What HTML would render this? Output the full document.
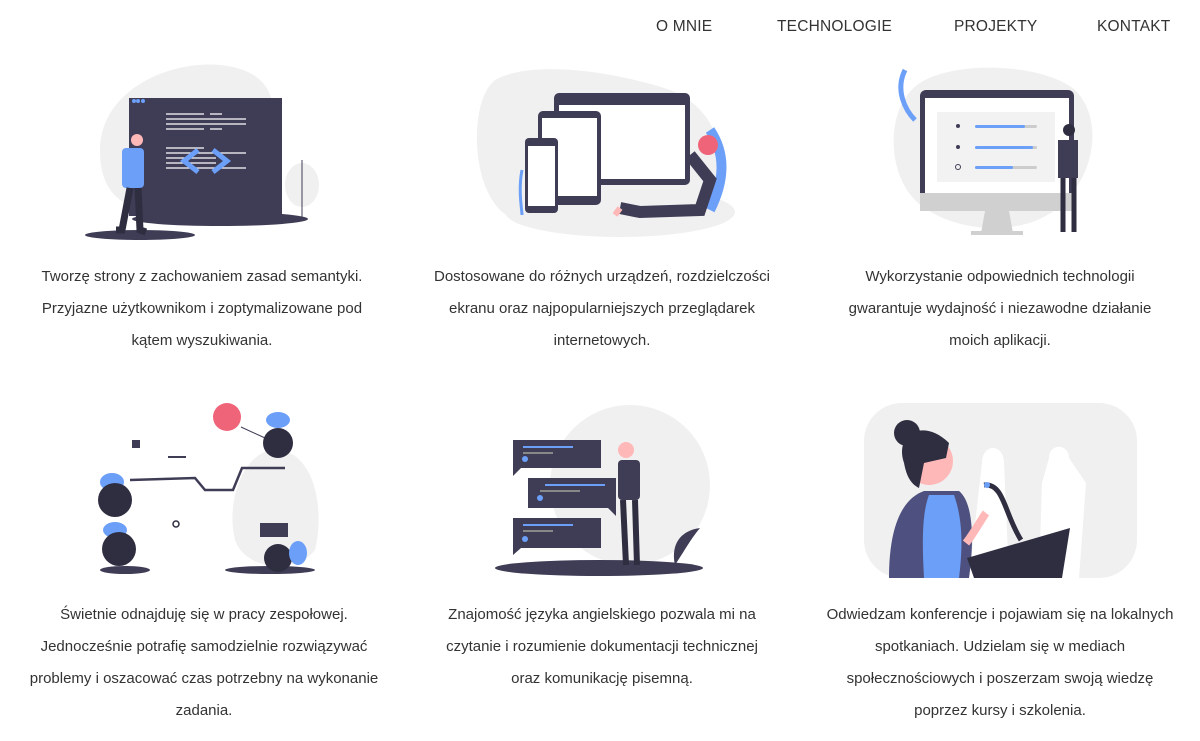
<!DOCTYPE html>
<html><head><meta charset="utf-8"><style>
body{margin:0;width:1200px;height:741px;background:#fff;font-family:"Liberation Sans","Noto Sans CJK SC",sans-serif;color:#333;position:relative;overflow:hidden}
.nav{position:absolute;top:18px;font-size:15.5px;letter-spacing:.2px;color:#333}
.t{position:absolute;width:400px;text-align:center;font-size:15px;line-height:32px;font-weight:300}
svg{position:absolute}
</style></head><body>
<div class="nav" style="left:656px">O MNIE</div>
<div class="nav" style="left:777px">TECHNOLOGIE</div>
<div class="nav" style="left:954px">PROJEKTY</div>
<div class="nav" style="left:1097px">KONTAKT</div>

<!-- 1 -->
<svg style="left:80px;top:60px" width="260" height="190">
<path d="M20 90 C20 30 90 0 140 5 C190 10 200 40 190 80 L60 150 C30 140 20 120 20 90Z" fill="#f0f0f0"/>
<ellipse cx="140" cy="159" rx="88" ry="7" fill="#3f3d56"/>
<ellipse cx="60" cy="175" rx="55" ry="5" fill="#3f3d56"/>
<rect x="49" y="38" width="153" height="118" fill="#3f3d56"/>
<circle cx="54" cy="41" r="2" fill="#6c9ff8"/><circle cx="58" cy="41" r="2" fill="#6c9ff8"/><circle cx="63" cy="41" r="2" fill="#6c9ff8"/>
<g stroke="#fff" stroke-width="1.2"><path d="M86 54h38M130 54h12M86 59h80M86 64h80M86 69h38M130 69h12M86 88h38M86 93h80M86 98h50M86 103h50M86 108h80"/></g>
<path d="M118 90 L104 101 L118 112 M133 90 L147 101 L133 112" stroke="#6c9ff8" stroke-width="5" fill="none"/>
<ellipse cx="222" cy="125" rx="17" ry="22" fill="#f0f0f0"/><path d="M222 100v57" stroke="#3f3d56"/>
<rect x="42" y="88" width="22" height="40" rx="4" fill="#6c9ff8"/>
<circle cx="57" cy="80" r="6" fill="#ffb8b8"/>
<path d="M50 128 L42 170 L36 170 M58 128 L60 170 L66 172" stroke="#2f2e41" stroke-width="7" fill="none"/>
</svg>
<!-- 2 -->
<svg style="left:470px;top:60px" width="270" height="185">
<path d="M25 20 C60 0 140 10 200 30 C250 50 260 100 240 140 C200 180 60 180 30 150 C0 120 0 40 25 20Z" fill="#f0f0f0"/>
<ellipse cx="150" cy="152" rx="115" ry="25" fill="#f0f0f0"/>
<rect x="84" y="33" width="136" height="92" rx="5" fill="#3f3d56"/><rect x="89" y="45" width="126" height="74" fill="#fff"/>
<rect x="68" y="51" width="63" height="94" rx="5" fill="#3f3d56"/><rect x="72" y="58" width="55" height="78" fill="#fff"/>
<rect x="55" y="78" width="33" height="75" rx="4" fill="#3f3d56"/><rect x="58" y="86" width="27" height="60" fill="#fff"/>
<path d="M240 70 C260 100 250 130 240 150" stroke="#6c9ff8" stroke-width="10" fill="none"/>
<circle cx="238" cy="85" r="10" fill="#f0647a"/><path d="M220 95 L240 120 L230 150 L170 152 L150 148" stroke="#3f3d56" stroke-width="12" fill="none"/>
<path d="M150 148 L145 155" stroke="#ffb8b8" stroke-width="6"/>
<path d="M52 110 C48 130 52 150 52 155" stroke="#6c9ff8" stroke-width="3" fill="none"/>
</svg>
<!-- 3 -->
<svg style="left:885px;top:60px" width="230" height="185">
<path d="M40 20 C80 0 160 5 190 30 C220 60 210 120 170 150 C130 180 60 170 30 140 C0 110 0 40 40 20Z" fill="#f0f0f0"/>
<path d="M20 10 C10 30 20 50 30 60" stroke="#6c9ff8" stroke-width="5" fill="none"/>
<rect x="35" y="30" width="154" height="112" rx="6" fill="#3f3d56"/><rect x="40" y="38" width="144" height="95" fill="#fff"/>
<rect x="35" y="133" width="154" height="18" fill="#d0d0d0"/>
<path d="M100 151 L96 173 L128 173 L124 151Z" fill="#d0d0d0"/><rect x="86" y="171" width="52" height="4" fill="#d0d0d0"/>
<rect x="52" y="52" width="118" height="70" fill="#f2f2f2"/>
<rect x="90" y="65" width="62" height="3" rx="1.5" fill="#ccc"/><rect x="90" y="65" width="50" height="3" rx="1.5" fill="#6c9ff8"/>
<rect x="90" y="86" width="62" height="3" rx="1.5" fill="#ccc"/><rect x="90" y="86" width="58" height="3" rx="1.5" fill="#6c9ff8"/>
<rect x="90" y="106" width="62" height="3" rx="1.5" fill="#ccc"/><rect x="90" y="106" width="38" height="3" rx="1.5" fill="#6c9ff8"/>
<circle cx="73" cy="66" r="2" fill="#3f3d56"/><circle cx="73" cy="87" r="2" fill="#3f3d56"/><circle cx="73" cy="107" r="2.5" fill="none" stroke="#3f3d56"/>
<circle cx="184" cy="70" r="6" fill="#2f2e41"/>
<path d="M173 80 h20 v38 h-20z" fill="#3f3d56"/><path d="M178 118 L178 172 M189 118 L189 172" stroke="#2f2e41" stroke-width="5"/>
</svg>
<!-- 4 -->
<svg style="left:85px;top:400px" width="240" height="180">
<path d="M190 50 C230 50 240 110 230 150 C210 175 160 170 150 140 C140 100 160 50 190 50Z" fill="#f0f0f0"/>
<ellipse cx="185" cy="170" rx="45" ry="4" fill="#3f3d56"/><ellipse cx="40" cy="170" rx="25" ry="4" fill="#3f3d56"/>
<path d="M45 80 L110 78 L120 90 L148 90 L157 68 L200 68" stroke="#3f3d56" stroke-width="2.5" fill="none"/>
<path d="M83 57 h18" stroke="#3f3d56" stroke-width="2"/>
<circle cx="142" cy="17" r="14" fill="#f0647a"/><path d="M156 27 L180 38" stroke="#3f3d56"/>
<ellipse cx="193" cy="20" rx="12" ry="8" fill="#6c9ff8"/><circle cx="193" cy="43" r="15" fill="#2f2e41"/>
<ellipse cx="27" cy="82" rx="12" ry="9" fill="#6c9ff8"/><circle cx="30" cy="100" r="17" fill="#2f2e41"/>
<ellipse cx="30" cy="130" rx="12" ry="8" fill="#6c9ff8"/><circle cx="34" cy="149" r="17" fill="#2f2e41"/>
<circle cx="91" cy="124" r="3" fill="none" stroke="#2f2e41" stroke-width="1.5"/>
<rect x="47" y="40" width="8" height="8" fill="#3f3d56"/>
<rect x="175" y="123" width="28" height="14" fill="#3f3d56"/><circle cx="193" cy="158" r="14" fill="#2f2e41"/><ellipse cx="213" cy="153" rx="9" ry="12" fill="#6c9ff8"/>
</svg>
<!-- 5 -->
<svg style="left:495px;top:400px" width="230" height="180">
<circle cx="135" cy="85" r="80" fill="#f0f0f0"/>
<ellipse cx="104" cy="168" rx="104" ry="8" fill="#3f3d56"/>
<rect x="18" y="40" width="88" height="28" fill="#3f3d56"/><path d="M18 68 v8 l8-8z" fill="#3f3d56"/>
<rect x="33" y="78" width="88" height="30" fill="#3f3d56"/><path d="M121 108 v8 l-8-8z" fill="#3f3d56"/>
<rect x="18" y="118" width="88" height="30" fill="#3f3d56"/><path d="M18 148 v7 l8-7z" fill="#3f3d56"/>
<g stroke="#6c9ff8" stroke-width="2"><path d="M28 47h50M50 85h60M28 125h50"/></g><g stroke="#888" stroke-width="2"><path d="M28 53h30M45 91h40M28 131h30"/></g>
<circle cx="30" cy="59" r="3" fill="#6c9ff8"/><circle cx="45" cy="98" r="3" fill="#6c9ff8"/><circle cx="30" cy="139" r="3" fill="#6c9ff8"/>
<circle cx="131" cy="50" r="8" fill="#ffb8b8"/><rect x="123" y="60" width="22" height="40" rx="4" fill="#3f3d56"/>
<path d="M128 100 L131 165 M140 100 L142 165" stroke="#2f2e41" stroke-width="6"/>
<path d="M180 165 C175 140 190 130 205 128 C195 140 190 150 180 165Z" fill="#3f3d56"/>
</svg>
<!-- 6 -->
<svg style="left:864px;top:403px" width="273" height="175">
<rect x="0" y="0" width="273" height="175" rx="38" fill="#f0f0f0"/>
<path d="M118 60 C118 40 140 40 140 60 L145 175 L105 175 Z" fill="#fff"/>
<path d="M185 55 C185 40 205 40 205 55 L222 80 L215 175 L175 175 L178 80Z" fill="#fff"/>
<path d="M25 175 C25 120 40 95 60 88 L95 88 C110 100 110 140 105 175Z" fill="#4e5180"/>
<path d="M65 92 L90 92 C100 120 98 150 95 175 L60 175 C58 140 58 110 65 92Z" fill="#6c9ff8"/>
<circle cx="65" cy="58" r="24" fill="#ffb8b8"/>
<path d="M40 60 C30 30 60 15 85 40 L82 55 L60 60 L55 85 C45 80 42 70 40 60Z" fill="#2f2e41"/>
<circle cx="43" cy="30" r="13" fill="#2f2e41"/>
<path d="M102 140 C110 130 118 115 122 110" stroke="#ffb8b8" stroke-width="8"/>
<path d="M120 82 C140 80 140 110 157 137" stroke="#2f2e41" stroke-width="5" fill="none"/><circle cx="123" cy="82" r="3" fill="#6c9ff8"/>
<path d="M103 155 L206 125 L198 175 L110 175Z" fill="#2f2e41"/>
</svg>

<div class="t" style="left:2px;top:261px">Tworzę strony z zachowaniem zasad semantyki.<br>Przyjazne użytkownikom i zoptymalizowane pod<br>kątem wyszukiwania.</div>
<div class="t" style="left:402px;top:261px">Dostosowane do różnych urządzeń, rozdzielczości<br>ekranu oraz najpopularniejszych przeglądarek<br>internetowych.</div>
<div class="t" style="left:800px;top:261px">Wykorzystanie odpowiednich technologii<br>gwarantuje wydajność i niezawodne działanie<br>moich aplikacji.</div>
<div class="t" style="left:4px;top:599px">Świetnie odnajduję się w pracy zespołowej.<br>Jednocześnie potrafię samodzielnie rozwiązywać<br>problemy i oszacować czas potrzebny na wykonanie<br>zadania.</div>
<div class="t" style="left:402px;top:599px">Znajomość języka angielskiego pozwala mi na<br>czytanie i rozumienie dokumentacji technicznej<br>oraz komunikację pisemną.</div>
<div class="t" style="left:800px;top:599px">Odwiedzam konferencje i pojawiam się na lokalnych<br>spotkaniach. Udzielam się w mediach<br>społecznościowych i poszerzam swoją wiedzę<br>poprzez kursy i szkolenia.</div>
</body></html>
